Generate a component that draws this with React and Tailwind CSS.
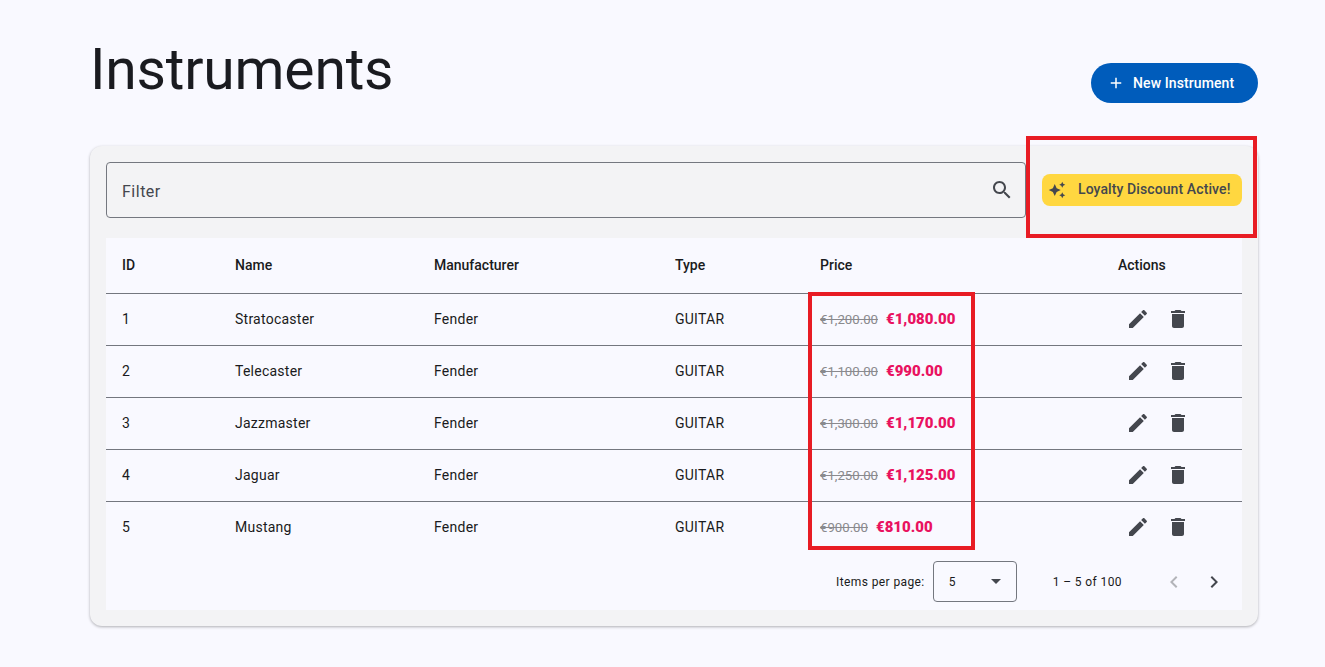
const rows = [
  [1, "Stratocaster", "€1,200.00", "€1,080.00"],
  [2, "Telecaster", "€1,100.00", "€990.00"],
  [3, "Jazzmaster", "€1,300.00", "€1,170.00"],
  [4, "Jaguar", "€1,250.00", "€1,125.00"],
  [5, "Mustang", "€900.00", "€810.00"],
];

const I = ({ d, className }) => (
  <svg viewBox="0 0 24 24" className={className} fill="currentColor" aria-hidden="true">
    <path d={d} />
  </svg>
);
const edit = "M3 17.25V21h3.75L17.81 9.94l-3.75-3.75L3 17.25zM20.71 7.04c.39-.39.39-1.02 0-1.41l-2.34-2.34c-.39-.39-1.02-.39-1.41 0l-1.83 1.83 3.75 3.75 1.83-1.83z";
const del = "M6 19c0 1.1.9 2 2 2h8c1.1 0 2-.9 2-2V7H6v12zM19 4h-3.5l-1-1h-5l-1 1H5v2h14V4z";
const search = "M15.5 14h-.79l-.28-.27C15.41 12.59 16 11.11 16 9.5 16 5.91 13.09 3 9.5 3S3 5.91 3 9.5 5.91 16 9.5 16c1.61 0 3.09-.59 4.23-1.57l.27.28v.79l5 4.99L20.49 19l-4.99-5zm-6 0C7.01 14 5 11.99 5 9.5S7.01 5 9.5 5 14 7.01 14 9.5 11.99 14 9.5 14z";
const spark = "M19 9l1.25-2.75L23 5l-2.75-1.25L19 1l-1.25 2.75L15 5l2.75 1.25L19 9zm-7.5.5L9 4 6.5 9.5 1 12l5.5 2.5L9 20l2.5-5.5L17 12l-5.5-2.5zM19 15l-1.25 2.75L15 19l2.75 1.25L19 23l1.25-2.75L23 19l-2.75-1.25L19 15z";
const plus = "M19 13h-6v6h-2v-6H5v-2h6V5h2v6h6v2z";

export default function App() {
  return (
    <div className="relative min-h-[667px] bg-[#f9f9ff] pl-[90px] pr-[67px] pt-[34px] font-['Roboto',sans-serif] text-[#1a1b20]">
      <div className="flex items-start justify-between">
        <h1 className="text-[57px] leading-[72px] font-normal tracking-[-0.2px]">Instruments</h1>
        <button className="mt-[29px] flex h-10 w-[167px] items-center rounded-full bg-[#005cbb] pl-[16px] text-[14px] font-medium tracking-[0.1px] text-white">
          <I d={plus} className="h-[18px] w-[18px]" />
          <span className="ml-2">New Instrument</span>
        </button>
      </div>

      <div className="mt-10 h-[480px] rounded-xl bg-[#f3f3f5] p-4 shadow-[0_1px_3px_rgba(0,0,0,0.3)]">
        <div className="flex items-center">
          <div className="flex h-14 w-[920px] items-center justify-between rounded border border-[#74777f] pl-[15px] pr-[11px] text-[16px] tracking-[0.5px] text-[#44474e]">
            <span className="mt-1">Filter</span>
            <I d={search} className="h-6 w-6" />
          </div>
          <div className="ml-4 flex h-8 w-[200px] items-center rounded-lg bg-[#ffd740] pl-[6px] text-[14px] font-medium tracking-[0.1px] text-[#44474e]">
            <I d={spark} className="h-[18px] w-[18px]" />
            <span className="mb-px ml-3 whitespace-nowrap">Loyalty Discount Active!</span>
          </div>
        </div>

        <div className="mt-5 bg-[#f9f9ff]">
          <table className="w-full table-fixed border-collapse text-left text-[14px] tracking-[0.25px]">
            <thead>
              <tr className="h-[55px] border-b border-[#74777f] tracking-normal">
                <th className="w-[113px] pl-4 font-medium">ID</th>
                <th className="w-[199px] pl-4 font-medium">Name</th>
                <th className="w-[241px] pl-4 font-medium">Manufacturer</th>
                <th className="w-[145px] pl-4 font-medium">Type</th>
                <th className="w-[298px] pl-4 font-medium">Price</th>
                <th className="pl-4 font-medium">Actions</th>
              </tr>
            </thead>
            <tbody>
              {rows.map(([id, name, was, now], i) => (
                <tr key={id} className={i < 4 ? "h-[52px] border-b border-[#74777f]" : "h-[52px]"}>
                  <td className="pl-4">{id}</td>
                  <td className="pl-4">{name}</td>
                  <td className="pl-4">Fender</td>
                  <td className="pl-4">GUITAR</td>
                  <td className="pl-4">
                    <span className="text-[13.2px] tracking-normal text-[#8a8a8e] line-through">{was}</span>
                    <span className="ml-2 text-[15px] font-black tracking-normal text-[#e9125f]">{now}</span>
                  </td>
                  <td className="pl-4">
                    <div className="flex items-center pl-[8px] text-[#44474e]">
                      <I d={edit} className="h-6 w-6" />
                      <I d={del} className="ml-4 h-6 w-6" />
                    </div>
                  </td>
                </tr>
              ))}
            </tbody>
          </table>
          <div className="flex h-[57px] items-start whitespace-nowrap pl-[730px] text-[12px] tracking-[0.4px]">
            <span className="mt-[21px] leading-4">Items per page:</span>
            <div className="ml-2 mt-2 flex h-[41px] w-[84px] shrink-0 items-center justify-between rounded border border-[#74777f] pl-[15px] pr-[15px]">
              <span>5</span>
              <span className="h-0 w-0 border-x-[5px] border-t-[5px] border-x-transparent border-t-[#44474e]" />
            </div>
            <span className="ml-9 mt-[21px] leading-4">1 – 5 of 100</span>
            <I d="M15.41 7.41L14 6l-6 6 6 6 1.41-1.41L10.83 12z" className="ml-[40px] mt-[17px] h-6 w-6 shrink-0 text-[#b3b4b9]" />
            <I d="M10 6L8.59 7.41 13.17 12l-4.58 4.59L10 18l6-6z" className="ml-4 mt-[17px] h-6 w-6 shrink-0 text-[#44474e]" />
          </div>
        </div>
      </div>

      <div className="absolute left-[1026px] top-[136px] h-[102px] w-[231px] border-4 border-[#e81c24]" />
      <div className="absolute left-[808px] top-[292px] h-[258px] w-[167px] border-4 border-[#e81c24]" />
    </div>
  );
}
